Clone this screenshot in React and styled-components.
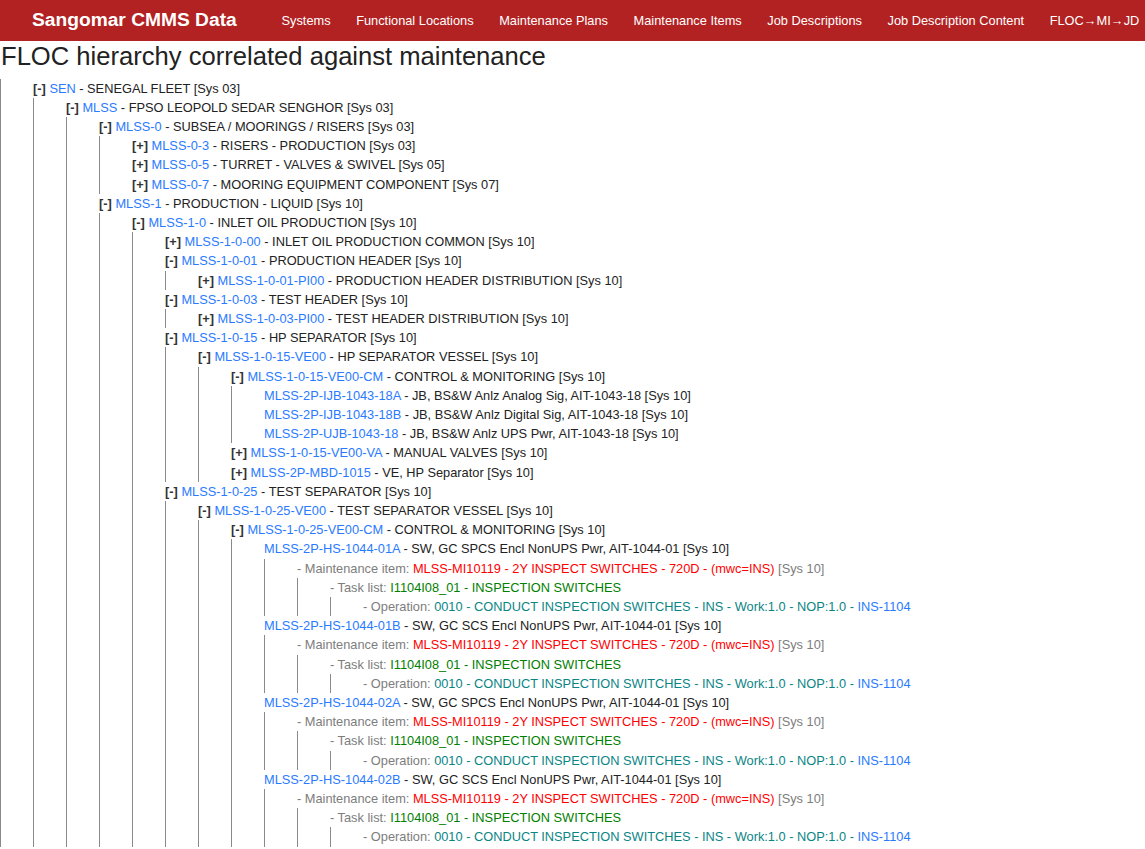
import React from "react";
import styled, { createGlobalStyle } from "styled-components";

const GlobalStyle = createGlobalStyle`
  html, body { margin: 0; padding: 0; background: #fff; }
  body { font-family: "Liberation Sans", Arial, sans-serif; color: #222; }
`;

const Header = styled.header`
  display: flex;
  align-items: center;
  height: 41px;
  padding: 0 0 0 32px;
  background: #b22222;
  overflow: hidden;
  white-space: nowrap;
`;

const Brand = styled.a`
  font-size: 19.2px;
  font-weight: bold;
  color: #fff;
  text-decoration: none;
  margin-right: 32px;
  padding-bottom: 2px;
`;

const Nav = styled.nav`
  display: flex;
  align-items: center;
`;

const NavLink = styled.a`
  font-size: 12.8px;
  color: #fff;
  text-decoration: none;
  padding: 0 12.8px;
`;

const Title = styled.h1`
  font-size: 25.6px;
  font-weight: normal;
  color: #222;
  margin: 1px 0 7px 1px;
  line-height: 29.5px;
`;

const Tree = styled.ul`
  list-style: none;
  margin: 0;
  padding: 0 0 0 32px;
  border-left: 1px solid #8a8a8a;
  font-size: 12.8px;
  line-height: 19.2px;
`;

const Node = styled.li`
  margin: 0;
  padding: 0;
  white-space: nowrap;
`;

const Toggle = styled.span`
  font-weight: bold;
  color: #333;
  margin-right: 3.6px;
  cursor: pointer;
`;

const Code = styled.a`
  color: #2a7aff;
  text-decoration: none;
`;

const Text = styled.span`
  color: ${(p) =>
    p.$tone === "label"
      ? "#7d7d7d"
      : p.$tone === "red"
      ? "#ff0000"
      : p.$tone === "green"
      ? "#008000"
      : p.$tone === "teal"
      ? "#0a8585"
      : "#222"};
`;

const f = (open, code, desc, sys, children) => ({ kind: "floc", open, code, desc, sys, children });
const leaf = (code, desc, children) => ({ kind: "floc", open: null, code, desc, sys: "10", children });
const maint = () => ({
  kind: "mi",
  children: [{ kind: "task", children: [{ kind: "op" }] }],
});
const hs = (code, desc) => leaf(code, desc, [maint()]);

const data = [
  f(true, "SEN", "SENEGAL FLEET", "03", [
    f(true, "MLSS", "FPSO LEOPOLD SEDAR SENGHOR", "03", [
      f(true, "MLSS-0", "SUBSEA / MOORINGS / RISERS", "03", [
        f(false, "MLSS-0-3", "RISERS - PRODUCTION", "03"),
        f(false, "MLSS-0-5", "TURRET - VALVES & SWIVEL", "05"),
        f(false, "MLSS-0-7", "MOORING EQUIPMENT COMPONENT", "07"),
      ]),
      f(true, "MLSS-1", "PRODUCTION - LIQUID", "10", [
        f(true, "MLSS-1-0", "INLET OIL PRODUCTION", "10", [
          f(false, "MLSS-1-0-00", "INLET OIL PRODUCTION COMMON", "10"),
          f(true, "MLSS-1-0-01", "PRODUCTION HEADER", "10", [
            f(false, "MLSS-1-0-01-PI00", "PRODUCTION HEADER DISTRIBUTION", "10"),
          ]),
          f(true, "MLSS-1-0-03", "TEST HEADER", "10", [
            f(false, "MLSS-1-0-03-PI00", "TEST HEADER DISTRIBUTION", "10"),
          ]),
          f(true, "MLSS-1-0-15", "HP SEPARATOR", "10", [
            f(true, "MLSS-1-0-15-VE00", "HP SEPARATOR VESSEL", "10", [
              f(true, "MLSS-1-0-15-VE00-CM", "CONTROL & MONITORING", "10", [
                leaf("MLSS-2P-IJB-1043-18A", "JB, BS&W Anlz Analog Sig, AIT-1043-18"),
                leaf("MLSS-2P-IJB-1043-18B", "JB, BS&W Anlz Digital Sig, AIT-1043-18"),
                leaf("MLSS-2P-UJB-1043-18", "JB, BS&W Anlz UPS Pwr, AIT-1043-18"),
              ]),
              f(false, "MLSS-1-0-15-VE00-VA", "MANUAL VALVES", "10"),
              f(false, "MLSS-2P-MBD-1015", "VE, HP Separator", "10"),
            ]),
          ]),
          f(true, "MLSS-1-0-25", "TEST SEPARATOR", "10", [
            f(true, "MLSS-1-0-25-VE00", "TEST SEPARATOR VESSEL", "10", [
              f(true, "MLSS-1-0-25-VE00-CM", "CONTROL & MONITORING", "10", [
                hs("MLSS-2P-HS-1044-01A", "SW, GC SPCS Encl NonUPS Pwr, AIT-1044-01"),
                hs("MLSS-2P-HS-1044-01B", "SW, GC SCS Encl NonUPS Pwr, AIT-1044-01"),
                hs("MLSS-2P-HS-1044-02A", "SW, GC SPCS Encl NonUPS Pwr, AIT-1044-01"),
                hs("MLSS-2P-HS-1044-02B", "SW, GC SCS Encl NonUPS Pwr, AIT-1044-01"),
              ]),
            ]),
          ]),
        ]),
      ]),
    ]),
  ]),
];

function Row({ node }) {
  if (node.kind === "mi") {
    return (
      <>
        <Text $tone="label">- Maintenance item: </Text>
        <Text $tone="red">MLSS-MI10119 - 2Y INSPECT SWITCHES - 720D - (mwc=INS)</Text>
        <Text $tone="label"> [Sys 10]</Text>
      </>
    );
  }
  if (node.kind === "task") {
    return (
      <>
        <Text $tone="label">- Task list: </Text>
        <Text $tone="green">I1104I08_01 - INSPECTION SWITCHES</Text>
      </>
    );
  }
  if (node.kind === "op") {
    return (
      <>
        <Text $tone="label">- Operation: </Text>
        <Text $tone="teal">0010 - CONDUCT INSPECTION SWITCHES - INS - Work:1.0 - NOP:1.0 - </Text>
        <Code href="#">INS-1104</Code>
      </>
    );
  }
  return (
    <>
      {node.open !== null && <Toggle>{node.open ? "[-]" : "[+]"}</Toggle>}
      <Code href="#">{node.code}</Code>
      <Text> - {node.desc} [Sys {node.sys}]</Text>
    </>
  );
}

function Branch({ nodes }) {
  return (
    <Tree>
      {nodes.map((n, i) => (
        <Node key={i}>
          <Row node={n} />
          {n.children && n.children.length > 0 && <Branch nodes={n.children} />}
        </Node>
      ))}
    </Tree>
  );
}

const links = [
  "Systems",
  "Functional Locations",
  "Maintenance Plans",
  "Maintenance Items",
  "Job Descriptions",
  "Job Description Content",
  "FLOC\u2192MI\u2192JD",
];

export default function App() {
  return (
    <>
      <GlobalStyle />
      <Header>
        <Brand href="#">Sangomar CMMS Data</Brand>
        <Nav>
          {links.map((l) => (
            <NavLink key={l} href="#">
              {l}
            </NavLink>
          ))}
        </Nav>
      </Header>
      <Title>FLOC hierarchy correlated against maintenance</Title>
      <Branch nodes={data} />
    </>
  );
}
